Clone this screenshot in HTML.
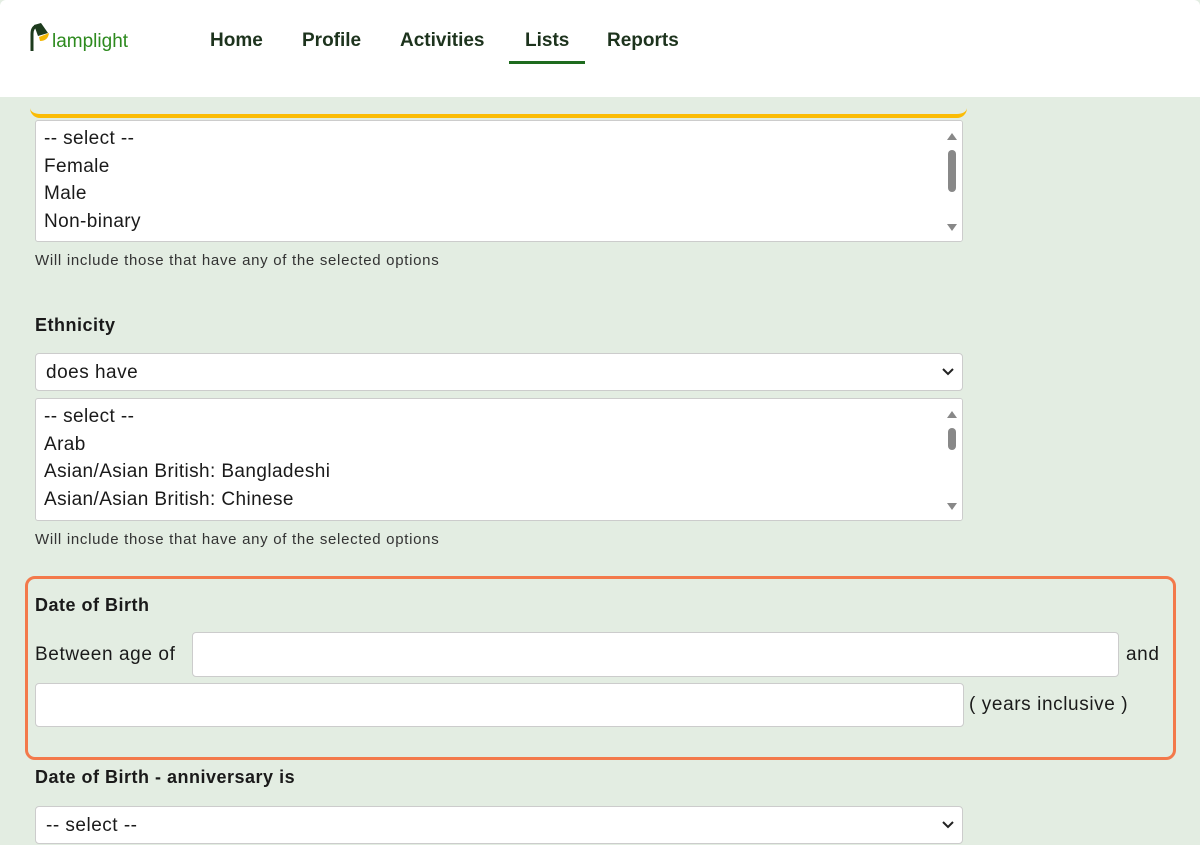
<!DOCTYPE html>
<html><head><style>
body{margin:0;width:1200px;height:837px;overflow:hidden;background:#e3ede2;font-family:"Liberation Sans",sans-serif;color:#1a1a1a;position:relative}
.hdr{position:absolute;left:0;top:0;width:1200px;height:97px;background:#fff;border-radius:6px 6px 0 0}
.nav{position:absolute;top:30px;font-size:19px;font-weight:bold;color:#1d331d}
.abs{position:absolute}
.lb{position:absolute;left:35px;width:928px;background:#fff;border:1px solid #ccc;border-radius:3px;overflow:hidden;font-size:19px;letter-spacing:0.4px;box-sizing:border-box;padding-top:4px}
.lb div.o{padding-left:8px;height:27.6px;line-height:27.6px}
.sb{position:absolute;right:0;top:0;width:20px;height:100%;background:#fff}
.help{position:absolute;left:35px;font-size:15px;color:#333;letter-spacing:0.7px}
.lbl{position:absolute;left:35px;font-size:18px;font-weight:bold;letter-spacing:0.5px}
.inp{position:absolute;background:#fff;border:1px solid #ccc;border-radius:4px}
.t{position:absolute;font-size:19px;letter-spacing:0.6px}
.sel{position:absolute;left:35px;width:928px;height:38px;background:#fff;border:1px solid #ccc;border-radius:4px;font-size:19px;line-height:38px;box-sizing:border-box;padding-left:10px;letter-spacing:0.5px}
.chev{position:absolute;right:8px;top:13px}
</style></head><body>
<div class="hdr">
 <svg class="abs" style="left:28px;top:22px" width="24" height="30" viewBox="0 0 24 30"><path d="M4 29 L4 12 Q4 5 9 4" stroke="#1d3b1d" stroke-width="3" fill="none"/><path d="M6 3 L13 1 L20 11 L10 14 Z" fill="#1d3b1d"/><path d="M11 15 L21 11 Q20 19 12 19Z" fill="#f2b705"/></svg>
 <div class="abs" style="left:52px;top:31px;font-size:19px;color:#2d8a1e">lamplight</div>
 <div class="nav" style="left:210px">Home</div>
 <div class="nav" style="left:302px">Profile</div>
 <div class="nav" style="left:400px">Activities</div>
 <div class="nav" style="left:525px">Lists</div>
 <div class="abs" style="left:509px;top:61px;width:76px;height:3px;background:#1e6b1e"></div>
 <div class="nav" style="left:607px">Reports</div>
</div>
<div class="abs" style="left:30px;top:104px;width:937px;height:14px;border-bottom:4px solid #fbbc05;border-radius:0 0 10px 10px;box-sizing:border-box"></div>
<div class="lb" style="top:120px;height:122px">
 <div class="o">-- select --</div><div class="o">Female</div><div class="o">Male</div><div class="o">Non-binary</div>
 <div class="sb"><svg width="20" height="122"><path d="M5 19 L10 12 L15 19Z" fill="#888"/><rect x="6" y="29" width="8" height="42" rx="4" fill="#888"/><path d="M5 103 L10 110 L15 103Z" fill="#888"/></svg></div>
</div>
<div class="help" style="top:252px">Will include those that have any of the selected options</div>
<div class="lbl" style="top:315px">Ethnicity</div>
<div class="sel" style="top:353px">does have<svg class="chev" width="12" height="10"><path d="M1 2 L6 7 L11 2" stroke="#222" stroke-width="2" fill="none"/></svg></div>
<div class="lb" style="top:398px;height:123px">
 <div class="o">-- select --</div><div class="o">Arab</div><div class="o">Asian/Asian British: Bangladeshi</div><div class="o">Asian/Asian British: Chinese</div>
 <div class="sb"><svg width="20" height="123"><path d="M5 19 L10 12 L15 19Z" fill="#888"/><rect x="6" y="29" width="8" height="22" rx="4" fill="#888"/><path d="M5 104 L10 111 L15 104Z" fill="#888"/></svg></div>
</div>
<div class="help" style="top:531px">Will include those that have any of the selected options</div>
<div class="abs" style="left:25px;top:576px;width:1151px;height:184px;border:3px solid #f3794b;border-radius:10px;box-sizing:border-box"></div>
<div class="lbl" style="top:595px">Date of Birth</div>
<div class="t" style="left:35px;top:644px">Between age of</div>
<div class="inp" style="left:192px;top:632px;width:925px;height:43px"></div>
<div class="t" style="left:1126px;top:644px">and</div>
<div class="inp" style="left:35px;top:683px;width:927px;height:42px"></div>
<div class="t" style="left:969px;top:694px">( years inclusive )</div>
<div class="lbl" style="top:767px">Date of Birth - anniversary is</div>
<div class="sel" style="top:806px">-- select --<svg class="chev" width="12" height="10"><path d="M1 2 L6 7 L11 2" stroke="#222" stroke-width="2" fill="none"/></svg></div>
</body></html>
